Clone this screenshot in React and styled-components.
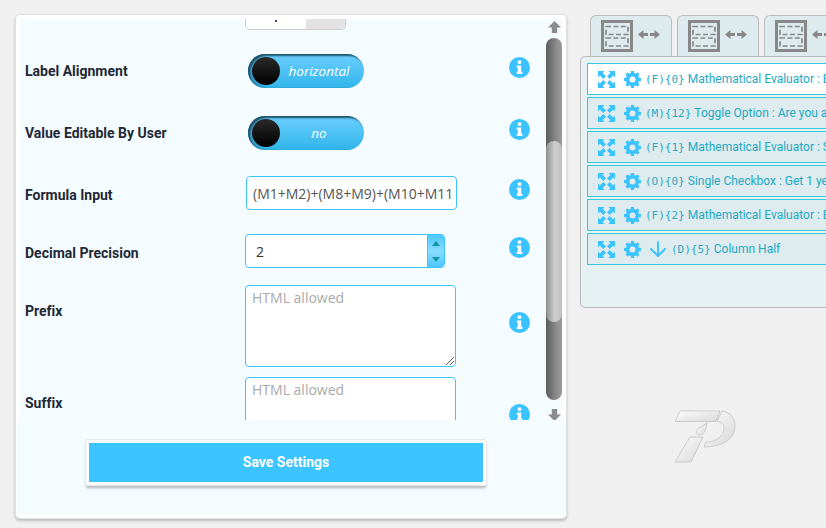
import React from 'react';
import styled, { createGlobalStyle } from 'styled-components';
import { ArrowDown } from 'lucide-react';

const Global = createGlobalStyle`
  html, body { margin: 0; padding: 0; background: #f0f0f0; overflow: hidden; }
  #root { width: 826px; height: 528px; overflow: hidden; }
  * { box-sizing: border-box; }
`;

const Page = styled.div`
  width: 826px; height: 528px; display: flex; align-items: flex-start; gap: 13px;
  padding: 14px 0 0 15px; background: #f0f0f0; overflow: hidden;
`;
const Panel = styled.section`
  width: 552px; height: 505px; flex: none; display: flex; flex-direction: column;
  padding-top: 4px; background: #fff; border: 1px solid #e0e0e0; border-radius: 5px;
  box-shadow: 0 2px 3px rgba(0,0,0,.22);
`;
const ScrollArea = styled.div`
  height: 401px; margin: 0 4px; display: flex; background: #f4fcff; overflow: hidden; flex: none;
`;
const Form = styled.div`
  flex: 1; min-width: 0; height: 401px; overflow: hidden; padding-left: 5px;
`;
const Row = styled.div`
  display: grid; grid-template-columns: 220px 220px 1fr; align-items: center;
  height: ${p => p.$h}px; margin-top: ${p => p.$top}px;
`;
const Label = styled.label`
  font: 700 14px Roboto, sans-serif; color: #222835; font-variant-ligatures: none;
  transform: translateY(${p => p.$dy || 0}px);
`;
const InfoSvg = styled.svg`
  width: 21px; height: 21px; margin: 0 0 8px 44px;
`;
const Stub = styled.div`
  width: 101px; height: 11px; margin-left: 220px; display: flex; overflow: hidden;
  border: 1px solid #ccc; border-top: 0; border-radius: 0 0 5px 5px;
`;
const StubOn = styled.div`
  width: 60px; background: #fff; display: flex; justify-content: center;
  &::after { content: ''; width: 2px; height: 2px; margin-top: 1px; background: #33448a; }
`;
const StubOff = styled.div` flex: 1; background: #e3e3e3; `;
const Toggle = styled.div`
  width: 116px; height: 34px; margin-left: 3px; display: flex; align-items: center;
  padding-left: 4px; border-radius: 17px;
  background: linear-gradient(#6ccfff, #30b5ea);
  box-shadow: inset 2px 2px 2px #1f5168, inset 4px 0 2px rgba(31,81,104,.35);
`;
const Knob = styled.span`
  width: 28px; height: 28px; flex: none; border-radius: 50%;
  background: linear-gradient(#2a2a2a, #000);
`;
const ToggleText = styled.span`
  flex: 1; padding-right: 6px; text-align: center; color: #fff;
  font: italic 13.5px "Open Sans", sans-serif;
`;
const TextInput = styled.div`
  width: 211px; height: 34px; margin-left: 1px; padding-left: 6px; display: flex; align-items: center;
  background: #fff; border: 1px solid #3cc4ff; border-radius: 4px; color: #555;
  font: 14px "Open Sans", sans-serif; white-space: nowrap; overflow: hidden;
`;
const NumberBox = styled.div`
  width: 200px; height: 34px; display: flex; background: #fff;
  border: 1px solid #3cc4ff; border-radius: 4px; overflow: hidden;
`;
const NumberValue = styled.div`
  flex: 1; padding-left: 10px; display: flex; align-items: center; color: #333;
  font: 14px "Open Sans", sans-serif;
`;
const Spin = styled.div`
  width: 17px; display: flex; flex-direction: column; justify-content: space-between; align-items: center;
  padding: 6px 0 5px; background: linear-gradient(#4cc8ff, #8adbff 50%, #4cc8ff);
  border-left: 1px solid #3cc4ff;
  svg { width: 8px; height: 5px; fill: #10979f; display: block; }
`;
const Area = styled.div`
  width: 211px; height: 82px; padding: 2px 6px; background: #fff; position: relative;
  border: 1px solid #3cc4ff; border-radius: 4px; color: #aaa;
  font: 14px "Open Sans", sans-serif;
`;
const Grip = styled.svg`
  position: absolute; right: 1px; bottom: 1px; width: 8px; height: 8px; stroke: #666; fill: none;
`;
const Bar = styled.div`
  width: 16px; flex: none; display: flex; flex-direction: column; align-items: center;
  svg { width: 13px; height: 12px; flex: none; fill: #8b8b8b; }
`;
const ArrowSlot = styled.div`
  height: ${p => p.$h}px; padding-top: ${p => p.$pad}px; flex: none;
`;
const Track = styled.div`
  width: 16px; height: 362px; flex: none; border-radius: 8px; overflow: hidden;
  background: linear-gradient(90deg, #5c5c5c, #8f8f8f 70%, #9a9a9a);
`;
const Thumb = styled.div`
  width: 100%; height: 181px; margin-top: 103px; border-radius: 8px;
  background: linear-gradient(90deg, #8f8f8f, #cfcfcf 55%, #c0c0c0);
`;
const Footer = styled.div`
  flex: 1; margin: 0 1px 3px; display: flex; justify-content: center; align-items: flex-start;
  padding: 19px 10px 0 0; background: #f4fcff;
`;
const SaveFrame = styled.div`
  width: 402px; height: 47px; padding: 3px; background: #fff; border: 1px solid #e8e8e8; border-radius: 3px;
  box-shadow: 0 3px 3px -1px rgba(0,0,0,.28);
`;
const SaveButton = styled.button`
  width: 100%; height: 39px; padding: 0 0 2px; border: 0; background: #3bc4ff; color: #fff;
  font: 700 14px Roboto, sans-serif;
`;
const Side = styled.div`
  width: 260px; flex: none; display: flex; flex-direction: column; margin-top: 1px;
`;
const Tabs = styled.div` display: flex; gap: 5px; padding-left: 10px; width: 300px; `;
const Tab = styled.div`
  width: 82px; height: 42px; flex: none; display: flex; align-items: flex-start; padding: 4px 0 0 10px;
  background: #deebee; border: 1px solid #bcbcbc; border-bottom: 0; border-radius: 6px 6px 0 0;
`;
const List = styled.div`
  width: 300px; height: 252px; margin-top: -1px; padding: 6px 0 0 6px; position: relative;
  display: flex; flex-direction: column; gap: 2px; background: #e6f1f3;
  border: 1px solid #b8b8b8; border-radius: 5px;
`;
const Item = styled.div`
  height: 32px; width: 300px; flex: none; display: flex; align-items: center; padding-left: 10px;
  background: ${p => (p.$active ? '#fff' : '#deecef')};
  border: 1.5px solid #35c8df; white-space: nowrap; color: #22a9c4;
  font: 12px Roboto, sans-serif;
  svg { flex: none; }
`;
const GearSvg = styled.svg` width: 17px; height: 17px; margin: 0 4px 0 9px; `;
const Down = styled(ArrowDown)` width: 24px; height: 24px; color: #3bc3ff; margin: 0 1px 0 1px; `;
const Mono = styled.span` font: 11px "DejaVu Sans Mono", monospace; margin-right: 3px; color: #2ea7c2; `;
const LogoBox = styled.div` margin: 101px 0 0 94px; width: 64px; height: 56px; `;

const Info = () => (
  <InfoSvg viewBox="0 0 21 21">
    <circle cx="10.5" cy="10.5" r="10.5" fill="#3bc3ff" />
    <rect x="8.8" y="3.6" width="3.4" height="3.2" rx=".6" fill="#fff" />
    <path d="M7.8 8.4h4.4v6.4h1.2v2.3H7.8v-2.3h1v-4.1h-1z" fill="#fff" />
  </InfoSvg>
);

const Gear = () => (
  <GearSvg viewBox="0 0 17 17">
    <circle cx="8.5" cy="8.5" r="4.9" fill="none" stroke="#3bc3ff" strokeWidth="3.8" />
    {[0, 45, 90, 135, 180, 225, 270, 315].map(r => (
      <rect key={r} x="6.9" y="0" width="3.2" height="3.4" fill="#3bc3ff" transform={`rotate(${r} 8.5 8.5)`} />
    ))}
  </GearSvg>
);

const Expand = () => (
  <svg width="17" height="17" viewBox="0 0 17 17" fill="#3bc3ff">
    {[0, 90, 180, 270].map(r => (
      <path key={r} transform={`rotate(${r} 8.5 8.5)`} d="M0 0h6.5L4.6 1.9 8 5.3 5.3 8 1.9 4.6 0 6.5z" />
    ))}
  </svg>
);

const LayoutIcon = () => (
  <svg width="32" height="32" viewBox="0 0 32 32" style={{ flex: 'none' }}>
    <rect x="1.5" y="1.5" width="29" height="29" fill="none" stroke="#878787" strokeWidth="3" />
    <rect x="5" y="6.5" width="22" height="8" fill="none" stroke="#878787" strokeWidth="1.7" strokeDasharray="5 2.4" />
    <rect x="5" y="18" width="22" height="8" fill="none" stroke="#878787" strokeWidth="1.7" strokeDasharray="5 2.4" />
  </svg>
);
const SwapIcon = () => (
  <svg width="22" height="9" viewBox="0 0 22 9" style={{ flex: 'none', margin: '10px 0 0 5px' }} fill="#878787">
    <path d="M0 4.5L5.5 0V3h4.5v3H5.5v3zM22 4.5L16.5 0V3H12v3h4.5v3z" />
  </svg>
);
const ArrowUpGlyph = () => (
  <svg viewBox="0 0 13 12"><path d="M6.5 0L13 6.5H9.2V12H3.8V6.5H0z" /></svg>
);
const ArrowDownGlyph = () => (
  <svg viewBox="0 0 13 12"><path d="M6.5 12L0 5.5H3.8V0H9.2V5.5H13z" /></svg>
);
const Logo = () => (
  <svg width="64" height="56" viewBox="0 0 64 56">
    <defs>
      <linearGradient id="lg" x1="0" y1="0" x2="1" y2="1">
        <stop offset="0" stopColor="#fdfdfd" />
        <stop offset="1" stopColor="#d8d8d8" />
      </linearGradient>
    </defs>
    <g fill="url(#lg)" stroke="#bcbcbc" strokeWidth=".7">
      <path d="M6 2H46L42 12.5H1z" />
      <path d="M16 28H29L17 53H1z" />
      <path d="M48 2C57 3 61 10 61 17C61 30 48 38 30 38L32 33C42 33 50 27 50 19C50 15 47 12.5 43 12.5z" />
      <path d="M33 14L25 19C21 22 22 26 26 26C30 26 32 20 33 14z" />
    </g>
  </svg>
);

const Triangle = ({ down }) => (
  <svg viewBox="0 0 8 5"><path d={down ? 'M0 0h8L4 5z' : 'M4 0l4 5H0z'} /></svg>
);

const items = [
  ['(F){0}', 'Mathematical Evaluator : Estimated Total', true],
  ['(M){12}', 'Toggle Option : Are you a member of'],
  ['(F){1}', 'Mathematical Evaluator : Subtotal of'],
  ['(O){0}', 'Single Checkbox : Get 1 year of'],
  ['(F){2}', 'Mathematical Evaluator : Estimated'],
  ['(D){5}', 'Column Half', false, true],
];

export default function App() {
  return (
    <Page>
      <Global />
      <Panel>
        <ScrollArea>
          <Form>
            <Stub><StubOn /><StubOff /></Stub>
            <Row $h={34} $top={24}>
              <Label>Label Alignment</Label>
              <Toggle><Knob /><ToggleText>horizontal</ToggleText></Toggle>
              <Info />
            </Row>
            <Row $h={34} $top={28}>
              <Label>Value Editable By User</Label>
              <Toggle><Knob /><ToggleText>no</ToggleText></Toggle>
              <Info />
            </Row>
            <Row $h={34} $top={26}>
              <Label $dy={2}>Formula Input</Label>
              <TextInput>(M1+M2)+(M8+M9)+(M10+M11</TextInput>
              <Info />
            </Row>
            <Row $h={34} $top={24}>
              <Label $dy={2}>Decimal Precision</Label>
              <NumberBox>
                <NumberValue>2</NumberValue>
                <Spin><Triangle /><Triangle down /></Spin>
              </NumberBox>
              <Info />
            </Row>
            <Row $h={82} $top={17}>
              <Label $dy={-15}>Prefix</Label>
              <Area>HTML allowed
                <Grip viewBox="0 0 8 8"><path d="M0 8L8 0M4 8l4-4" /></Grip>
              </Area>
              <Info />
            </Row>
            <Row $h={82} $top={10}>
              <Label $dy={-15}>Suffix</Label>
              <Area>HTML allowed</Area>
              <Info />
            </Row>
          </Form>
          <Bar>
            <ArrowSlot $h={19} $pad={0}><ArrowUpGlyph /></ArrowSlot>
            <Track><Thumb /></Track>
            <ArrowSlot $h={19} $pad={7}><ArrowDownGlyph /></ArrowSlot>
          </Bar>
        </ScrollArea>
        <Footer>
          <SaveFrame><SaveButton>Save Settings</SaveButton></SaveFrame>
        </Footer>
      </Panel>
      <Side>
        <Tabs>
          {[0, 1, 2].map(i => (
            <Tab key={i}><LayoutIcon /><SwapIcon /></Tab>
          ))}
        </Tabs>
        <List>
          {items.map(([code, text, active, down]) => (
            <Item key={code} $active={active}>
              <Expand />
              <Gear />
              {down && <Down />}
              <Mono>{code}</Mono>
              {text}
            </Item>
          ))}
        </List>
        <LogoBox><Logo /></LogoBox>
      </Side>
    </Page>
  );
}
